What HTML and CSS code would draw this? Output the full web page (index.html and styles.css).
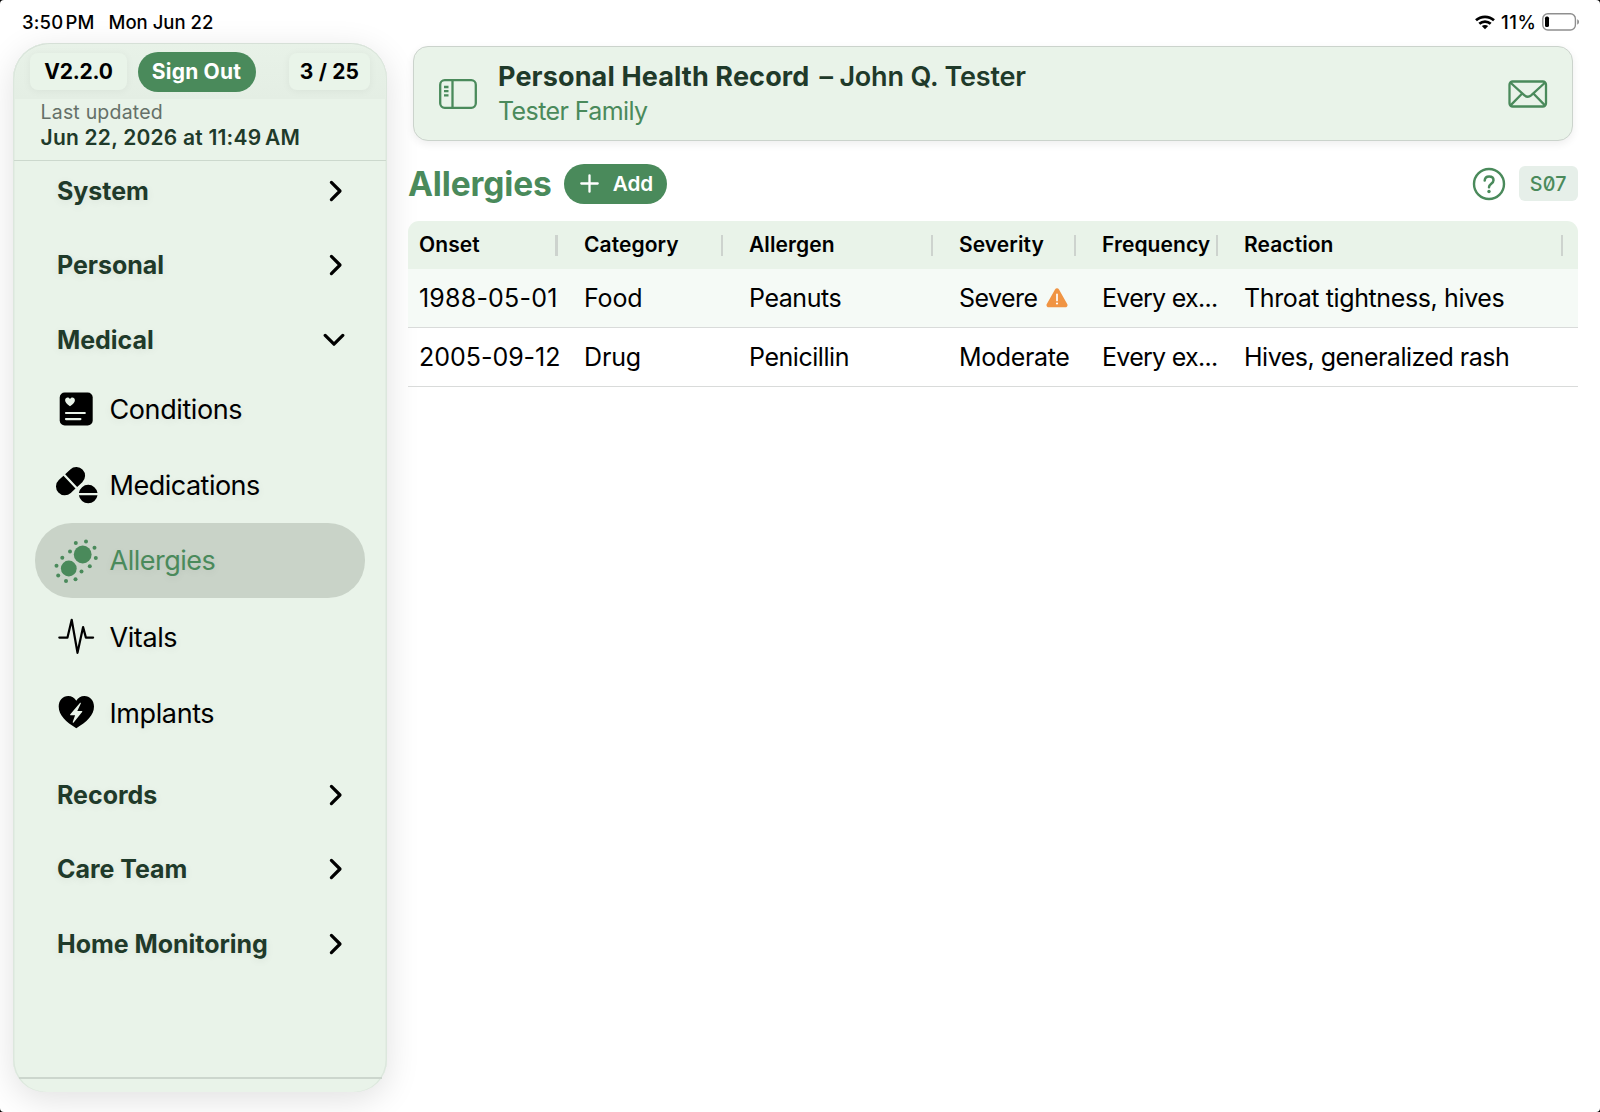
FILE: index.html
```html
<!DOCTYPE html>
<html lang="en">
<head>
<meta charset="utf-8">
<title>Personal Health Record</title>
<link rel="stylesheet" href="styles.css">
</head>
<body>
<div class="screen">
  <header class="status">
    <div class="status-left"><span>3:50<span class="meridiem">PM</span></span><span class="day">Mon Jun 22</span></div>
    <div class="status-right">
      <svg class="wifi" width="20" height="15" viewBox="0 0 20 15" fill="none" stroke="#000" stroke-width="2.7"><path d="M1 5.3C6 .6 14 .6 19 5.3"/><path d="M4.3 8.8C7.6 5.8 12.4 5.8 15.7 8.8"/><path d="M10 14.2 6.8 11.1C8.6 9.5 11.4 9.5 13.2 11.1Z" fill="#000" stroke="none"/></svg>
      <span class="percent">11%</span>
      <svg width="38" height="18" viewBox="0 0 38 18"><rect x=".8" y=".8" width="32.6" height="16.2" rx="5" fill="none" stroke="#8f8f8f" stroke-width="1.4"/><rect x="3" y="3.6" width="4" height="10.4" rx="1.6"/><path d="M35.2 6.2c2.4.8 2.4 4.6 0 5.4z" fill="#8f8f8f"/></svg>
    </div>
  </header>

  <div class="layout">
    <aside class="sidebar">
      <div class="toolbar">
        <span class="chip version">V2.2.0</span>
        <button class="signout">Sign Out</button>
        <span class="chip count">3 / 25</span>
      </div>
      <div class="updated">
        <div class="updated-label">Last updated</div>
        <div class="updated-time">Jun 22, 2026 at 11:49<span class="meridiem">AM</span></div>
      </div>
      <nav class="nav">
        <div class="group">System<svg class="chev" viewBox="0 0 14 22"><path d="M2.4 2.4 11 11l-8.6 8.6"/></svg></div>
        <div class="group">Personal<svg class="chev" viewBox="0 0 14 22"><path d="M2.4 2.4 11 11l-8.6 8.6"/></svg></div>
        <div class="group">Medical<svg class="chev-down" viewBox="0 0 22 14"><path d="M2.2 2.4 11 11.2l8.8-8.8"/></svg></div>
        <div class="items">
          <div class="item"><svg class="icon" viewBox="0 0 44 44"><rect x="5.7" y="5.5" width="33" height="33" rx="5"/><path class="cut" d="M16 19.2c-3-2.2-4.9-3.8-4.9-6 0-3.2 3.900-3.700 4.900-1.100 1-2.600 4.900-2.100 4.900 1.100 0 2.200-1.900 3.800-4.900 6z"/><path class="cut-line" d="M12 26h18.800M12 32.100h14.400"/></svg>Conditions</div>
          <div class="item medications"><svg class="icon" viewBox="0 0 44 44"><g transform="rotate(-43 16.500 18.200)"><path d="M15.100 9.400v17.600H8.700a8.800 8.800 0 0 1 0-17.600zM17.400 9.400h7a8.800 8.800 0 0 1 0 17.600h-7z"/></g><path d="M24.900 29.900a9.400 9.400 0 0 1 18.600 0zM24.900 32.300a9.400 9.400 0 0 0 18.600 0z"/></svg>Medications</div>
          <div class="item selected"><svg class="icon" viewBox="0 0 44 44"><circle cx="28.700" cy="15.500" r="8.900"/><circle cx="14.800" cy="29.500" r="7.900"/><circle cx="21.800" cy="4" r="2"/><circle cx="32" cy="2.500" r="2"/><circle cx="40.500" cy="8.700" r="2"/><circle cx="41.800" cy="18.900" r="2"/><circle cx="35.800" cy="27.300" r="2"/><circle cx="27.500" cy="32.400" r="2"/><circle cx="21.500" cy="40.200" r="2"/><circle cx="12" cy="42" r="2"/><circle cx="4.200" cy="36.400" r="2"/><circle cx="2.500" cy="26.700" r="2"/><circle cx="8.300" cy="18.700" r="2"/><circle cx="16" cy="12.400" r="2"/></svg>Allergies</div>
          <div class="item"><svg class="icon" viewBox="0 0 44 44"><path class="pulse" d="M5.300 22.600h8.200l4.200-17.800 5.800 33 5.600-25.700 2.800 10.500h7.200"/></svg>Vitals</div>
          <div class="item"><svg class="icon" viewBox="0 0 44 44"><path d="M22.300 37.300C12 31 4.700 24.500 4.700 15.600 4.700 9.500 8.800 5 14.200 5c3.500 0 6.300 1.700 8.100 4.700C24.100 6.700 26.900 5 30.400 5c5.400 0 9.600 4.500 9.600 10.600 0 8.900-7.400 15.400-17.700 21.700z"/><path class="cut" d="M25.900 12 16.300 23.200c-.4.5-.1 1 .5 1h4.300l-2.400 6.800c-.2.8.5 1.100 1 .5l8.400-10.600c.4-.5.2-1-.5-1h-4.300l3.500-7.300c.3-.8-.4-1.200-.9-.6z"/></svg>Implants</div>
        </div>
        <div class="group">Records<svg class="chev" viewBox="0 0 14 22"><path d="M2.4 2.4 11 11l-8.6 8.6"/></svg></div>
        <div class="group">Care Team<svg class="chev" viewBox="0 0 14 22"><path d="M2.4 2.4 11 11l-8.6 8.6"/></svg></div>
        <div class="group">Home Monitoring<svg class="chev" viewBox="0 0 14 22"><path d="M2.4 2.4 11 11l-8.6 8.6"/></svg></div>
      </nav>
      <div class="sidebar-foot"></div>
    </aside>

    <main class="main">
      <section class="banner">
        <svg width="38" height="30" viewBox="0 0 38 30" fill="none" stroke="#4a8a5b" stroke-width="2.3"><rect x="1.2" y="1.2" width="35.6" height="27.6" rx="4.5"/><path d="M13.5 1v28M5 8h4.500M5 12.200h4.500M5 16.400h4.500"/></svg>
        <div class="banner-text">
          <div class="banner-title"><b>Personal Health Record</b><span class="who">– John Q. Tester</span></div>
          <div class="banner-sub">Tester Family</div>
        </div>
        <svg width="40" height="28" viewBox="0 0 40 28" fill="none" stroke="#4a8a5b" stroke-width="2.3"><rect x="1.500" y="1.500" width="36.500" height="25" rx="3.200"/><path d="M2.300 2.500 16.500 15.300c2.200 1.900 4.400 1.900 6.600 0L37.200 2.500M2.300 25.600 14.200 13.500M37.200 25.600 25.400 13.500"/></svg>
      </section>

      <div class="heading">
        <h1>Allergies</h1>
        <button class="add"><svg width="19" height="19" viewBox="0 0 19 19" stroke="#fff" stroke-width="2.3" stroke-linecap="round"><path d="M9.500 1.300v16.400M1.300 9.500h16.400"/></svg>Add</button>
        <div class="heading-right">
          <svg width="34" height="34" viewBox="0 0 34 34" fill="none" stroke="#4a8a5b"><circle cx="17" cy="17" r="15" stroke-width="2.400"/><path d="M12.700 13.600c.2-2.600 2-4 4.400-4 2.600 0 4.400 1.500 4.400 3.700 0 3.500-4.500 3.400-4.500 6.900" stroke-width="2.500" stroke-linecap="round"/><circle cx="17" cy="24.500" r="1.700" fill="#4a8a5b" stroke="none"/></svg>
          <span class="code">S07</span>
        </div>
      </div>

      <div class="table">
        <div class="row head">
          <div>Onset<i></i></div><div>Category<i></i></div><div>Allergen<i></i></div><div>Severity<i></i></div><div>Frequency<i></i></div><div>Reaction<i></i></div>
        </div>
        <div class="row data tinted">
          <div class="date wide">1988-05-01</div><div class="cat">Food</div><div class="allergen">Peanuts</div>
          <div class="sev">Severe<svg class="warn" width="22" height="20" viewBox="0 0 22 20"><path d="M9 1.400c.9-1.600 3.100-1.600 4 0l8.200 14.600c.9 1.600-.2 3.200-2 3.200H2.800c-1.800 0-2.900-1.600-2-3.200z" fill="#f09443"/><path d="M11 6.400v6" stroke="#fff" stroke-width="1.700" stroke-linecap="round"/><circle cx="11" cy="15.500" r="1.100" fill="#fff"/></svg></div>
          <div class="freq">Every ex...</div><div>Throat tightness, hives</div>
        </div>
        <div class="row data">
          <div class="date">2005-09-12</div><div class="cat">Drug</div><div class="allergen">Penicillin</div><div>Moderate</div><div class="freq">Every ex...</div><div class="rash">Hives, generalized rash</div>
        </div>
      </div>
    </main>
  </div>
</div>
</body>
</html>
```
FILE: styles.css
```css
* { box-sizing: border-box; }
body { margin: 0; background: #000; font-family: Inter, "Liberation Sans", sans-serif; color: #000; }
button { font: inherit; border: 0; padding: 0; }
svg { display: block; flex: none; }

.screen { width: 1600px; height: 1112px; background: #fff; border-radius: 4px; overflow: hidden; display: flex; flex-direction: column; }

.status { height: 43px; flex: none; padding: 0 20px 0 22px; display: flex; justify-content: space-between; align-items: center; font-size: 18.5px; font-weight: 500; letter-spacing: .2px; }
.status-left { display: flex; gap: 14px; }
.day { letter-spacing: 0; }
.status .meridiem { margin-left: 2px; }
.status-right { display: flex; align-items: center; }
.wifi { margin-top: 1px; }
.percent { margin: 0 5.5px 0 6px; letter-spacing: .6px; }

.layout { flex: 1; display: flex; }

.sidebar { width: 374px; height: 1048.5px; margin-left: 13px; flex: none; background: #e9f3e9; border-radius: 36px 36px 32px 32px; display: flex; flex-direction: column; box-shadow: 0 8px 34px rgba(0,0,0,.12), inset 1.5px 0 #dce7dd, inset -1.5px 0 #dce7dd, inset 0 1.5px #d6e0d7; }
.toolbar { height: 55px; flex: none; margin: 1px 1.5px 0; padding: 0 15.5px; display: flex; align-items: center; border-radius: 35px 35px 0 0; background: linear-gradient(#e8f2e8, #e4eee4); }
.chip { height: 37px; border-radius: 8px; background: #e9f4e9; box-shadow: 0 1px 9px rgba(0,0,0,.05); display: flex; align-items: center; justify-content: center; font-size: 21px; font-weight: 700; }
.version { width: 97px; letter-spacing: -.2px; }
.count { width: 81px; margin-left: auto; letter-spacing: .2px; }
.signout { width: 118px; height: 40px; margin-left: 10.5px; border-radius: 20px; background: #4a8a5b; color: #fff; font-size: 21px; font-weight: 700; letter-spacing: .2px; }
.updated { height: 61.5px; flex: none; margin: 0 1px; padding: 1.3px 27px 0 26.5px; border-bottom: 1.5px solid #ccd8cd; }
.updated-label { font-size: 19.5px; line-height: 25px; letter-spacing: .2px; color: #657068; }
.updated-time { font-size: 21px; line-height: 26px; font-weight: 600; letter-spacing: .22px; color: #1f3a2a; }
.updated-time .meridiem { margin-left: 3.5px; }

.nav { flex: 1; padding: 7.3px 0 0; display: flex; flex-direction: column; }
.group { height: 46px; margin-bottom: 28.6px; padding: 0 43.5px 0 44px; display: flex; align-items: center; justify-content: space-between; font-size: 25px; font-weight: 700; letter-spacing: -.03px; color: #1f3a2a; text-shadow: 0 2px 9px rgba(0,0,0,.07); }
.chev { width: 14px; height: 22px; margin-right: 1px; }
.chev-down { width: 22px; height: 14px; margin-right: -1px; }
.chev path, .chev-down path { fill: none; stroke: #000; stroke-width: 3.2; stroke-linecap: round; stroke-linejoin: round; }
.items { margin: -20.3px 22px 20.3px; }
.item { height: 76px; padding-left: 19px; display: flex; align-items: center; gap: 11.5px; font-size: 27px; letter-spacing: -.4px; text-shadow: 0 2px 9px rgba(0,0,0,.07); }
.medications { letter-spacing: -.5px; }
.selected { height: 75px; margin-bottom: 1px; border-radius: 37px; background: #c9d3c8; color: #4a8a5b; letter-spacing: -.5px; }
.icon { width: 44px; height: 44px; fill: currentColor; }
.cut { fill: #e9f3e9; }
.cut-line { stroke: #e9f3e9; stroke-width: 2.2; stroke-linecap: round; }
.pulse { fill: none; stroke: #000; stroke-width: 2.2; stroke-linecap: round; stroke-linejoin: round; }
.sidebar-foot { height: 14.5px; flex: none; margin: 0 5.5px; border-top: 2px solid #ccd6cd; }

.main { flex: 1; padding: 2.5px 22px 0 21px; }
.banner { height: 95.5px; margin: 0 5px; padding: 1.5px 24px 0 25px; display: flex; align-items: center; border: 1.5px solid #cbd3cc; border-radius: 15px; background: #e9f3e9; box-shadow: 0 3px 9px rgba(0,0,0,.07); }
.banner-text { flex: 1; padding-left: 21px; }
.banner-title { display: flex; gap: 10px; font-size: 27px; line-height: 34px; color: #1f3a2a; }
.banner-title b { letter-spacing: .13px; }
.who { font-weight: 600; letter-spacing: -.18px; }
.banner-sub { font-size: 25px; line-height: 34px; letter-spacing: -.6px; color: #4a8a5b; }

.heading { height: 40px; margin: 22.5px 0 17.5px; display: flex; align-items: center; color: #4a8a5b; }
h1 { margin: 0; font-size: 33.5px; line-height: 40px; letter-spacing: -.14px; font-weight: 700; }
.add { width: 103px; height: 40px; margin-left: 12.5px; padding: 0 0 1px 15.5px; display: flex; align-items: center; gap: 14px; border-radius: 20px; background: #4a8a5b; color: #fff; font-size: 20.7px; font-weight: 600; }
.heading-right { margin-left: auto; display: flex; align-items: center; gap: 13px; }
.code { width: 59.5px; height: 35px; line-height: 36.5px; border-radius: 6px; background: #e6efe9; text-align: center; font-size: 19.7px; font-weight: 500; font-feature-settings: "zero"; letter-spacing: .2px; }

.table { border-radius: 11px 11px 0 0; overflow: hidden; }
.row { display: grid; grid-template-columns: 164.5px 165.500px 210px 143px 142px 1fr; }
.row > div { display: flex; align-items: center; padding-left: 11px; white-space: nowrap; }
.head { height: 48px; background: #e9f3e9; font-size: 21px; font-weight: 600; letter-spacing: .08px; }
.row.head > div { justify-content: space-between; padding: 0 15px 1px 11px; }
.row.head > div:nth-child(2) { padding-left: 11.5px; }
.head i { width: 2.5px; height: 21px; margin-top: 1px; background: #cdd3ce; }
.data { height: 59px; border-bottom: 1.5px solid #d9dbda; font-size: 25px; letter-spacing: -.38px; }
.tinted { background: #f5faf6; }
.date { letter-spacing: -.02px; }
.wide { letter-spacing: .2px; }
.cat { letter-spacing: -.15px; }
.row > .cat { padding-left: 11.5px; }
.allergen { letter-spacing: -.45px; }
.sev { letter-spacing: -.55px; }
.freq { letter-spacing: -.72px; }
.rash { letter-spacing: -.5px; }
.warn { margin-left: 8px; }
```
